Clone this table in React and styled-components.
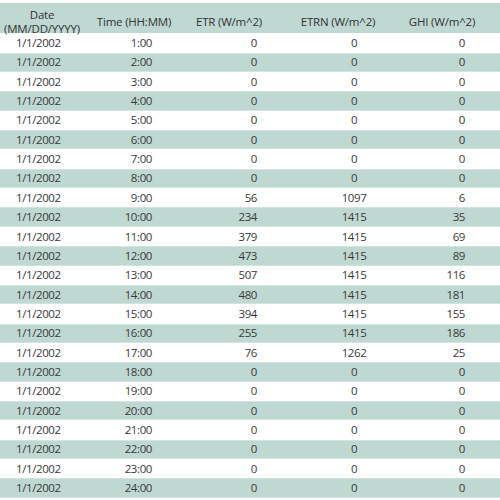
import React from "react";
import styled, { createGlobalStyle } from "styled-components";

const GlobalStyle = createGlobalStyle`
  html, body {
    margin: 0;
    padding: 0;
    background: #fff;
  }
  body {
    font-family: "Open Sans", "Noto Sans", sans-serif;
    color: #3a3a3a;
  }
`;

const Page = styled.div`
  width: 500px;
  height: 500px;
  overflow: hidden;
  padding-top: 3px;
  box-sizing: border-box;
`;

const Columns = "84px 96px 98px 120px 102px";

const HeadRow = styled.div`
  display: grid;
  grid-template-columns: ${Columns};
  grid-template-rows: 26px;
  align-items: center;
  height: 30.4px;
  padding-top: 6px;
  box-sizing: border-box;
  background: #bfd8d2;
  font-size: 11.5px;
  line-height: 12px;
  color: #333;
`;

const HeadCell = styled.div`
  display: flex;
  flex-direction: column;
  align-items: center;
  gap: 2px;
  white-space: nowrap;
  letter-spacing: -0.2px;
  padding-left: ${(props) => props.pl || 0}px;
  padding-right: ${(props) => props.pr || 0}px;
`;

const Row = styled.div`
  display: grid;
  grid-template-columns: ${Columns};
  align-items: center;
  height: 19.35px;
  box-sizing: border-box;
  background: ${(props) => (props.shaded ? "#bfd8d2" : "#fff")};
  border-top: ${(props) => (props.shaded ? "1px solid #d3e4e0" : "none")};
  border-bottom: ${(props) => (props.shaded ? "1px solid #d3e4e0" : "none")};
  font-size: 11.5px;
  line-height: 14px;
`;

const Cell = styled.div`
  white-space: nowrap;
  text-align: ${(props) => props.align || "right"};
  padding-left: ${(props) => props.pl || 0}px;
  padding-right: ${(props) => props.pr || 0}px;
  letter-spacing: -0.4px;
`;

const data = [
  [0, 0, 0], [0, 0, 0], [0, 0, 0], [0, 0, 0], [0, 0, 0], [0, 0, 0],
  [0, 0, 0], [0, 0, 0], [56, 1097, 6], [234, 1415, 35], [379, 1415, 69],
  [473, 1415, 89], [507, 1415, 116], [480, 1415, 181], [394, 1415, 155],
  [255, 1415, 186], [76, 1262, 25], [0, 0, 0], [0, 0, 0], [0, 0, 0],
  [0, 0, 0], [0, 0, 0], [0, 0, 0], [0, 0, 0],
];

export default function App() {
  return (
    <Page>
      <GlobalStyle />
      <HeadRow>
        <HeadCell>
          <span>Date</span>
          <span>(MM/DD/YYYY)</span>
        </HeadCell>
        <HeadCell pl={4}>Time (HH:MM)</HeadCell>
        <HeadCell>ETR (W/m^2)</HeadCell>
        <HeadCell>ETRN (W/m^2)</HeadCell>
        <HeadCell pr={14}>GHI (W/m^2)</HeadCell>
      </HeadRow>
      {data.map(([etr, etrn, ghi], i) => (
        <Row key={i} shaded={i % 2 === 1}>
          <Cell align="left" pl={16}>1/1/2002</Cell>
          <Cell pr={28}>{i + 1}:00</Cell>
          <Cell pr={21}>{etr}</Cell>
          <Cell align="center" pl={32}>{etrn}</Cell>
          <Cell pr={35}>{ghi}</Cell>
        </Row>
      ))}
    </Page>
  );
}
